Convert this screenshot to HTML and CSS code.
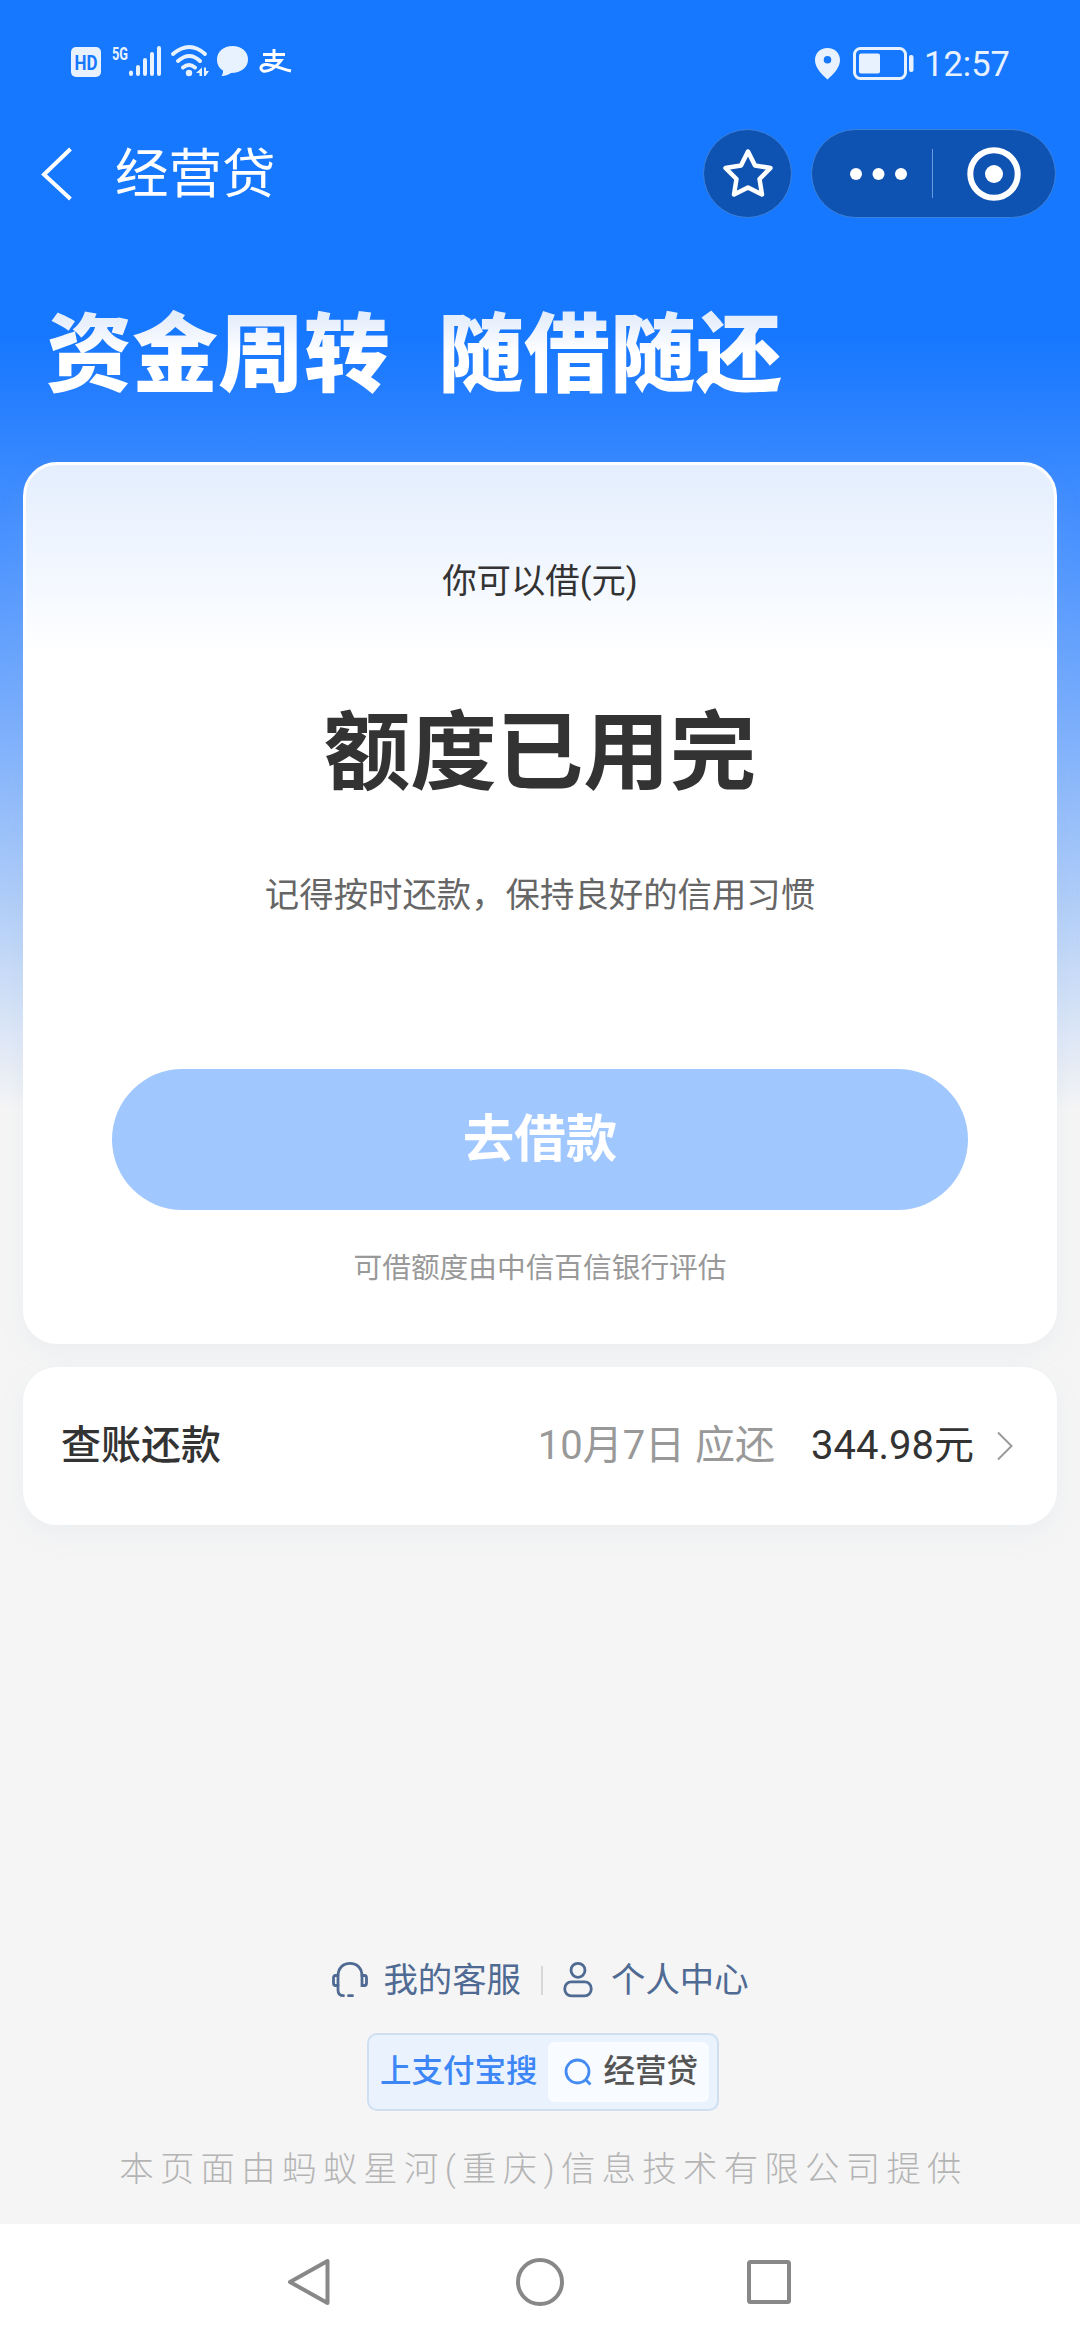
FILE: index.html
```html
<!DOCTYPE html>
<html lang="zh-CN">
<head>
<meta charset="utf-8">
<title>经营贷</title>
<link rel="stylesheet" href="styles.css">
</head>
<body>
<div class="screen">
  <header class="status">
    <svg class="status-left" width="230" height="40" viewBox="66 40 230 40" fill="#e8f2ff">
      <rect x="71" y="47" width="30" height="30" rx="5"/>
      <text class="hd" x="86" y="69.500" text-anchor="middle" textLength="23" lengthAdjust="spacingAndGlyphs">HD</text>
      <text class="gen" x="112" y="59.500" textLength="16" lengthAdjust="spacingAndGlyphs">5G</text>
      <g stroke="#e8f2ff" stroke-width="4" stroke-linecap="round">
        <path d="M131 72.500v1.500M138 67v7M145 60v14M152 54v20M159 48v26"/>
      </g>
      <g fill="none" stroke="#e8f2ff" stroke-width="4" stroke-linecap="round">
        <path d="M173 54Q189.500 40 205 54M178 61Q189.500 51 200 61M183 67.500Q189 62.500 195 67.500"/>
      </g>
      <circle cx="189" cy="73" r="3.200"/>
      <path d="M202 67.500v8.500h-2.500v-3h-3.500zM204 67.500v8.500h1.500l3.500-5h-3v-3.500z"/>
      <path d="M232.500 46C223.500 46 217 51.500 217 59.500C217 65 219.500 68.500 223 70.500C223 73 222.500 74.500 221.500 76C226 76 229 74.500 231 73C241 73 248 67.500 248 59.500C248 51.500 241.500 46 232.500 46Z"/>
      <path d="M263 54.500H285M274 49V60M265 60.500H281C276 68 268 72 263 71C259 69 261 64 267 64.500C275 65.500 282 69 291 71" fill="none" stroke="#fff" stroke-width="3"/>
    </svg>
    <div class="status-right">
      <svg width="102" height="40" viewBox="812 41 102 40" fill="#e8f2ff">
        <path fill-rule="evenodd" d="M826.500 46C819 46 814 51.500 814 58C814 66 821 72.500 826.500 77.500C832 72.500 839 66 839 58C839 51.500 834 46 826.500 46ZM826.500 54a3.800 3.800 0 1 1 0 7.600a3.800 3.800 0 1 1 0-7.600Z"/>
        <rect x="853.500" y="46.500" width="51" height="30" rx="6" fill="none" stroke="#e8f2ff" stroke-width="3"/>
        <rect x="858" y="51.500" width="21" height="20" rx="2"/>
        <rect x="908" y="53" width="4.500" height="17" rx="2"/>
      </svg>
      <span class="time">12:57</span>
    </div>
  </header>

  <nav class="nav">
    <svg class="back" width="36" height="56" viewBox="0 0 36 56"><path d="M32.500 3L6 28.500L32.500 53" fill="none" stroke="#fff" stroke-width="4"/></svg>
    <h1 class="title">经营贷</h1>
    <div class="star">
      <svg width="56" height="56" viewBox="0 0 56 56"><path d="M28 5.500L35 19.500L50.500 22L39.500 33L42 48.500L28 41.500L14 48.500L16.500 33L5.500 22L21 19.500Z" fill="none" stroke="#fff" stroke-width="4.500" stroke-linejoin="round"/></svg>
    </div>
    <div class="capsule">
      <svg width="57" height="12" viewBox="0 0 57 12" fill="#fff"><circle cx="6" cy="6" r="6"/><circle cx="28.500" cy="6" r="6"/><circle cx="51" cy="6" r="6"/></svg>
      <span class="capsule-line"></span>
      <svg width="54" height="54" viewBox="0 0 54 54"><circle cx="27" cy="27" r="23.700" fill="none" stroke="#fff" stroke-width="6"/><circle cx="27" cy="27" r="9" fill="#fff"/></svg>
    </div>
  </nav>

  <h2 class="slogan"><span>资金周转</span><span>随借随还</span></h2>

  <main class="cards">
    <section class="card loan">
      <p class="label">你可以借(元)</p>
      <p class="amount">额度已用完</p>
      <p class="hint">记得按时还款，保持良好的信用习惯</p>
      <button class="borrow" type="button">去借款</button>
      <p class="source">可借额度由中信百信银行评估</p>
    </section>
    <section class="card bill">
      <span class="bill-name">查账还款</span>
      <span class="bill-due">10月7日 应还</span>
      <span class="bill-sum">344.98元</span>
      <svg width="18" height="30" viewBox="0 0 18 30"><path d="M2 1.500L15.500 15L2 28.500" fill="none" stroke="#999" stroke-width="2"/></svg>
    </section>
  </main>

  <footer class="footer">
    <div class="links">
      <svg class="headset" width="38" height="38" viewBox="0 0 38 38" fill="none" stroke="#4f6a93" stroke-width="2.800" stroke-linecap="round">
        <path d="M7 15C7 7 12 2.300 19 2.300S31 7 31 15M7 14V29Q7 34.700 12.500 34.700M17.500 34.700H21.500"/>
        <path d="M7 14.500H4.500Q2.500 14.500 2.500 17V22Q2.500 24.500 4.500 24.500H7M31 14.500V24.500H33.500Q35.500 24.500 35.500 22V17Q35.500 14.500 33.500 14.500Z"/>
      </svg>
      <span>我的客服</span>
      <i class="links-line"></i>
      <svg class="person" width="30" height="38" viewBox="0 0 30 38" fill="none" stroke="#4f6a93" stroke-width="2.800"><circle cx="15" cy="9.300" r="7"/><rect x="1.800" y="20.800" width="26.400" height="14" rx="6.500"/></svg>
      <span>个人中心</span>
    </div>
    <div class="search">
      <span class="search-tip">上支付宝搜</span>
      <div class="search-box">
        <svg width="28" height="28" viewBox="0 0 28 28" fill="none" stroke="#448bf3" stroke-width="2.800"><circle cx="13.500" cy="13.500" r="11.500"/><path d="M21 21L26.500 26.500"/></svg>
        <span>经营贷</span>
      </div>
    </div>
    <p class="company">本页面由蚂蚁星河(重庆)信息技术有限公司提供</p>
  </footer>

  <div class="keys">
    <svg width="504" height="50" viewBox="0 0 504 50" fill="none" stroke="#888" stroke-width="4" stroke-linejoin="round">
      <path d="M41.500 4V46L4 25Z"/>
      <circle cx="254" cy="25" r="22"/>
      <rect x="463" y="5" width="40" height="40" rx="1.500"/>
    </svg>
  </div>
</div>
</body>
</html>
```
FILE: styles.css
```css
* { box-sizing: border-box; margin: 0; padding: 0; }

body {
  width: 1080px;
  height: 2340px;
  font-family: Roboto, "Noto Sans CJK SC", sans-serif;
  color: #333;
}

svg { display: block; flex: none; overflow: visible; }

.screen {
  display: flex;
  flex-direction: column;
  height: 2340px;
  background: linear-gradient(#1677ff 0, #1677ff 335px, #2e83ff 430px, #4b93ff 540px, #7aaefc 720px, #b0cdf8 900px, #dfe8f6 1040px, #f5f5f5 1110px);
}

.status {
  display: flex;
  justify-content: space-between;
  align-items: flex-start;
  height: 120px;
  padding: 40px 70px 0 66px;
}
.hd { font: 700 21px Roboto, sans-serif; fill: #1677ff; }
.gen { font: 700 19px Roboto, sans-serif; }
.status-right { display: flex; align-items: center; gap: 9px; padding-top: 1px; }
.time { padding-top: 2px; color: #e8f2ff; font-size: 34.500px; line-height: 42px; }

.nav {
  display: flex;
  align-items: center;
  height: 107px;
  padding: 0 24px 0 38px;
}
.title { margin-left: 41px; padding-top: 3px; font-size: 53.500px; font-weight: 400; line-height: 80px; color: #fff; }
.star, .capsule {
  display: flex;
  align-items: center;
  height: 89px;
  border: 1px solid #3c81da;
  background: #0f53b2;
}
.star { justify-content: center; width: 89px; margin-left: auto; border-radius: 50%; }
.capsule { width: 245px; margin-left: 19px; padding-left: 38px; border-radius: 45px; }
.capsule-line { width: 1px; height: 49px; margin: 0 34px 0 25px; background: #6a9be0; }

.slogan {
  display: flex;
  gap: 48px;
  height: 235px;
  padding: 67px 0 0 46px;
  font-size: 86px;
  font-weight: 900;
  line-height: 124px;
}
.slogan span {
  height: 124px;
  background: linear-gradient(#e4edfc 22px, #fff 60px);
  background-clip: text;
  -webkit-background-clip: text;
  color: transparent;
}

.cards { display: flex; flex-direction: column; gap: 23px; padding: 0 23px; }
.card { border-radius: 34px; background: #fff; box-shadow: 0 8px 24px rgba(150, 180, 210, .1); }
.loan {
  display: flex;
  flex-direction: column;
  align-items: center;
  height: 882px;
  padding-top: 91px;
  border: 3px solid #fff;
  background: linear-gradient(#e4eefd 0, #f0f6ff 90px, #fff 190px);
}
.label { font-size: 34.400px; line-height: 50px; }
.amount { margin-top: 86px; font-size: 86.500px; font-weight: 700; line-height: 124px; }
.hint { margin-top: 54px; font-size: 34.400px; line-height: 50px; color: #666; }
.borrow {
  width: 856px;
  height: 141px;
  margin-top: 149px;
  border: 0;
  border-radius: 71px;
  background: #a1c7ff;
  color: #fff;
  font: 700 51.500px/141px Roboto, "Noto Sans CJK SC", sans-serif;
}
.source { margin-top: 37px; font-size: 28.700px; line-height: 42px; color: #999; }

.bill { display: flex; align-items: center; height: 158px; padding: 0 43px 0 38px; font-size: 40px; line-height: 58px; }
.bill-name { font-weight: 500; }
.bill-due { margin-left: auto; color: #999; }
.bill-sum { margin: 0 22px 0 36px; }

.footer { display: flex; flex-direction: column; align-items: center; margin-top: auto; }
.links { display: flex; align-items: center; font-size: 34.400px; line-height: 50px; color: #4f6a93; }
.headset { margin-right: 14px; }
.links-line { width: 2px; height: 29px; margin: 0 20px; background: #d8d8d8; }
.person { margin-right: 18px; }
.search {
  display: flex;
  align-items: center;
  width: 352px;
  height: 78px;
  margin: 28px 0 0 6px;
  padding-left: 11px;
  border: 2px solid #cfdff2;
  border-radius: 10px;
  background: #eaf2fe;
  font-size: 31.500px;
  line-height: 46px;
}
.search-tip { color: #3d86f5; font-weight: 500; }
.search-box {
  display: flex;
  align-items: center;
  gap: 12px;
  width: 161px;
  height: 60px;
  margin-left: 10px;
  padding-left: 16px;
  border-radius: 6px;
  background: #f8fbff;
  color: #555;
  font-weight: 500;
}
.company { margin: 32px 0 29px 7px; font-size: 34.400px; font-weight: 300; line-height: 52px; letter-spacing: 6.300px; color: #b4b4b4; white-space: nowrap; }

.keys { display: flex; align-items: center; justify-content: center; height: 116px; padding-right: 4px; background: #fff; }
```
